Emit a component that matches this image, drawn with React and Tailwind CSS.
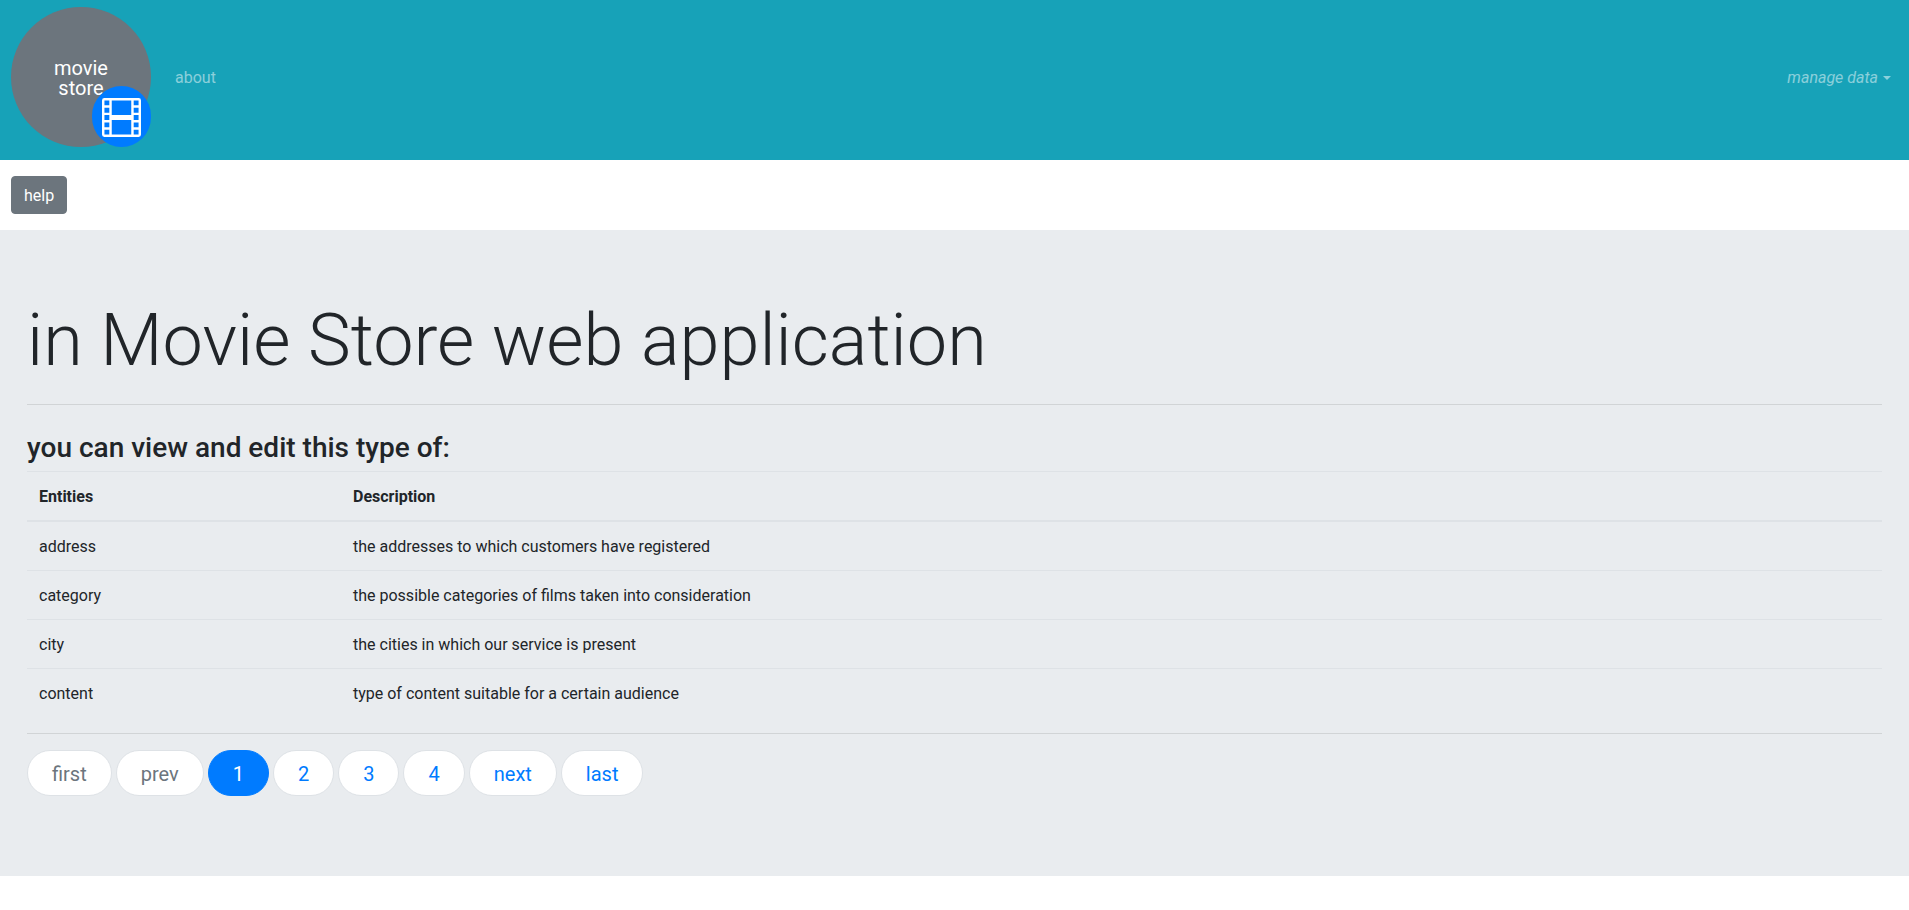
import { BsFilm } from "react-icons/bs";

const entities = [
  { name: "address", description: "the addresses to which customers have registered" },
  { name: "category", description: "the possible categories of films taken into consideration" },
  { name: "city", description: "the cities in which our service is present" },
  { name: "content", description: "type of content suitable for a certain audience" },
];

const pages = [
  { label: "first", disabled: true },
  { label: "prev", disabled: true },
  { label: "1", current: true },
  { label: "2" },
  { label: "3" },
  { label: "4" },
  { label: "next" },
  { label: "last" },
];

function pageClass(page) {
  if (page.current) return "border-[#007bff] bg-[#007bff] text-white";
  if (page.disabled) return "border-[#dee2e6] bg-white text-[#6c757d]";
  return "border-[#dee2e6] bg-white text-[#007bff]";
}

function Header() {
  return (
    <header className="flex items-center bg-[#17a2b8] px-[11px] pt-[7px] pb-[13px]">
      <a
        href="#home"
        className="relative mr-6 flex size-[140px] items-center justify-center rounded-full bg-[#6c757d] text-center text-xl leading-5 text-white"
      >
        <span className="pt-0.5">
          movie
          <br />
          store
        </span>
        <span className="absolute right-0 bottom-0 flex h-[61px] w-[59px] items-center justify-center rounded-full bg-[#007bff] pt-0.5">
          <BsFilm className="size-[39px]" aria-hidden="true" />
        </span>
      </a>
      <nav className="flex flex-1 items-center justify-between pt-0.5 text-white/50">
        <a href="#about">about</a>
        <button type="button" className="mr-[7px] flex items-center gap-[5px] italic">
          manage data
          <span className="border-x-4 border-t-4 border-x-transparent border-t-white/50" />
        </button>
      </nav>
    </header>
  );
}

export default function App() {
  return (
    <div className="bg-white font-[Roboto,sans-serif] text-base text-[#212529]">
      <Header />
      <div className="px-[11px] py-4">
        <button
          type="button"
          className="block rounded border border-[#6c757d] bg-[#6c757d] px-3 pt-[7px] pb-[5px] text-white"
        >
          help
        </button>
      </div>
      <main className="bg-[#e9ecef] px-[27px] pt-16 pb-20">
        <h1 className="mb-4 text-7xl leading-[94px] font-light">in Movie Store web application</h1>
        <hr className="mb-6 border-black/10" />
        <h2 className="mb-1 text-[28px] leading-[38px] font-medium">you can view and edit this type of:</h2>
        <table className="w-full text-left">
          <thead>
            <tr className="border-t border-b-2 border-[#dee2e6]">
              <th className="w-[314px] px-3 pt-[13px] pb-[11px] font-bold">Entities</th>
              <th className="px-3 pt-[13px] pb-[11px] font-bold">Description</th>
            </tr>
          </thead>
          <tbody>
            {entities.map((entity) => (
              <tr key={entity.name} className="border-t border-[#dee2e6]">
                <td className="px-3 pt-[13px] pb-[11px]">{entity.name}</td>
                <td className="px-3 pt-[13px] pb-[11px]">{entity.description}</td>
              </tr>
            ))}
          </tbody>
        </table>
        <hr className="my-4 border-black/10" />
        <nav aria-label="Pages">
          <ul className="flex gap-1 text-xl leading-5">
            {pages.map((page) => (
              <li key={page.label}>
                <button
                  type="button"
                  disabled={page.disabled}
                  aria-current={page.current ? "page" : undefined}
                  className={`block rounded-3xl border px-6 pt-[13px] pb-[11px] ${pageClass(page)}`}
                >
                  {page.label}
                </button>
              </li>
            ))}
          </ul>
        </nav>
      </main>
    </div>
  );
}
